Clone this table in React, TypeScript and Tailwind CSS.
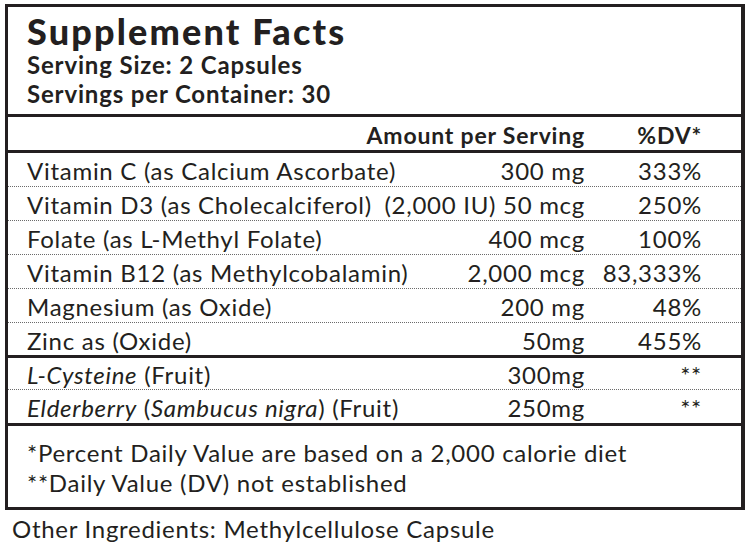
const rows = [
  { name: <>Vitamin C (as Calcium Ascorbate)</>, amount: "300 mg", dv: "333%" },
  { name: <>Vitamin D3 (as Cholecalciferol)</>, amount: "(2,000 IU) 50 mcg", dv: "250%" },
  { name: <>Folate (as L-Methyl Folate)</>, amount: "400 mcg", dv: "100%" },
  { name: <>Vitamin B12 (as Methylcobalamin)</>, amount: "2,000 mcg", dv: "83,333%" },
  { name: <>Magnesium (as Oxide)</>, amount: "200 mg", dv: "48%" },
  { name: <>Zinc as (Oxide)</>, amount: "50mg", dv: "455%" },
];

const others = [
  { name: <><i>L-Cysteine</i> (Fruit)</>, amount: "300mg", dv: "**" },
  {
    name: (
      <>
        <i>Elderberry</i> (<i>Sambucus nigra</i>) (Fruit)
      </>
    ),
    amount: "250mg",
    dv: "**",
  },
];

function Row({ name, amount, dv, dotted, h }: { name: React.ReactNode; amount: string; dv: string; dotted: boolean; h: string }) {
  return (
    <div
      className={`flex items-center pl-[19px] pr-[39px] pt-[3px] ${h} ${dotted ? "border-b border-dotted border-[#6b6b6b]" : ""}`}
    >
      <div className="flex-1 whitespace-nowrap">{name}</div>
      <div className="whitespace-nowrap text-right">{amount}</div>
      <div className="w-[117px] whitespace-nowrap text-right">{dv}</div>
    </div>
  );
}

export default function App() {
  return (
    <div
      className="h-[560px] w-[750px] bg-white pl-[5px] pt-[4px] tracking-[0.045em] text-[#231f20]"
      style={{ fontFamily: "Lato, 'Liberation Sans', sans-serif" }}
    >
      <div className="w-[740px] border-[3px] border-r-4 border-[#231f20]">
        <div className="h-[107px] pl-[19px] pt-[4px]">
          <h1 className="text-[36px] font-black leading-[40px] tracking-[0.06em]">Supplement Facts</h1>
          <div className="text-[24px] font-bold leading-[28px] tracking-[0.035em]">Serving Size: 2 Capsules</div>
          <div className="text-[24px] font-bold leading-[29px] tracking-[0.035em]">Servings per Container: 30</div>
        </div>

        <div className="flex h-[39px] items-center justify-end border-y-[3px] border-[#231f20] pr-[39px] pt-[3px] text-[23px] font-bold tracking-[0.035em]">
          <span>Amount per Serving</span>
          <span className="w-[117px] text-right">%DV*</span>
        </div>

        <div className="text-[24px]">
          {rows.map((r, i) => (
            <Row key={i} {...r} dotted={i < rows.length - 1} h={i < rows.length - 1 ? "h-[34px]" : "h-[32px]"} />
          ))}
        </div>

        <div className="border-y-[3px] border-[#231f20] text-[24px]">
          {others.map((r, i) => (
            <Row key={i} {...r} dotted={i === 0} h={i === 0 ? "h-[32px]" : "h-[33px]"} />
          ))}
        </div>

        <div className="h-[81px] pl-[19px] pt-[12px] text-[24px] leading-[30px]">
          <div>*Percent Daily Value are based on a 2,000 calorie diet</div>
          <div>**Daily Value (DV) not established</div>
        </div>
      </div>

      <div className="pl-[7px] pt-[4px] text-[24px] leading-[30px]">Other Ingredients: Methylcellulose Capsule</div>
    </div>
  );
}
